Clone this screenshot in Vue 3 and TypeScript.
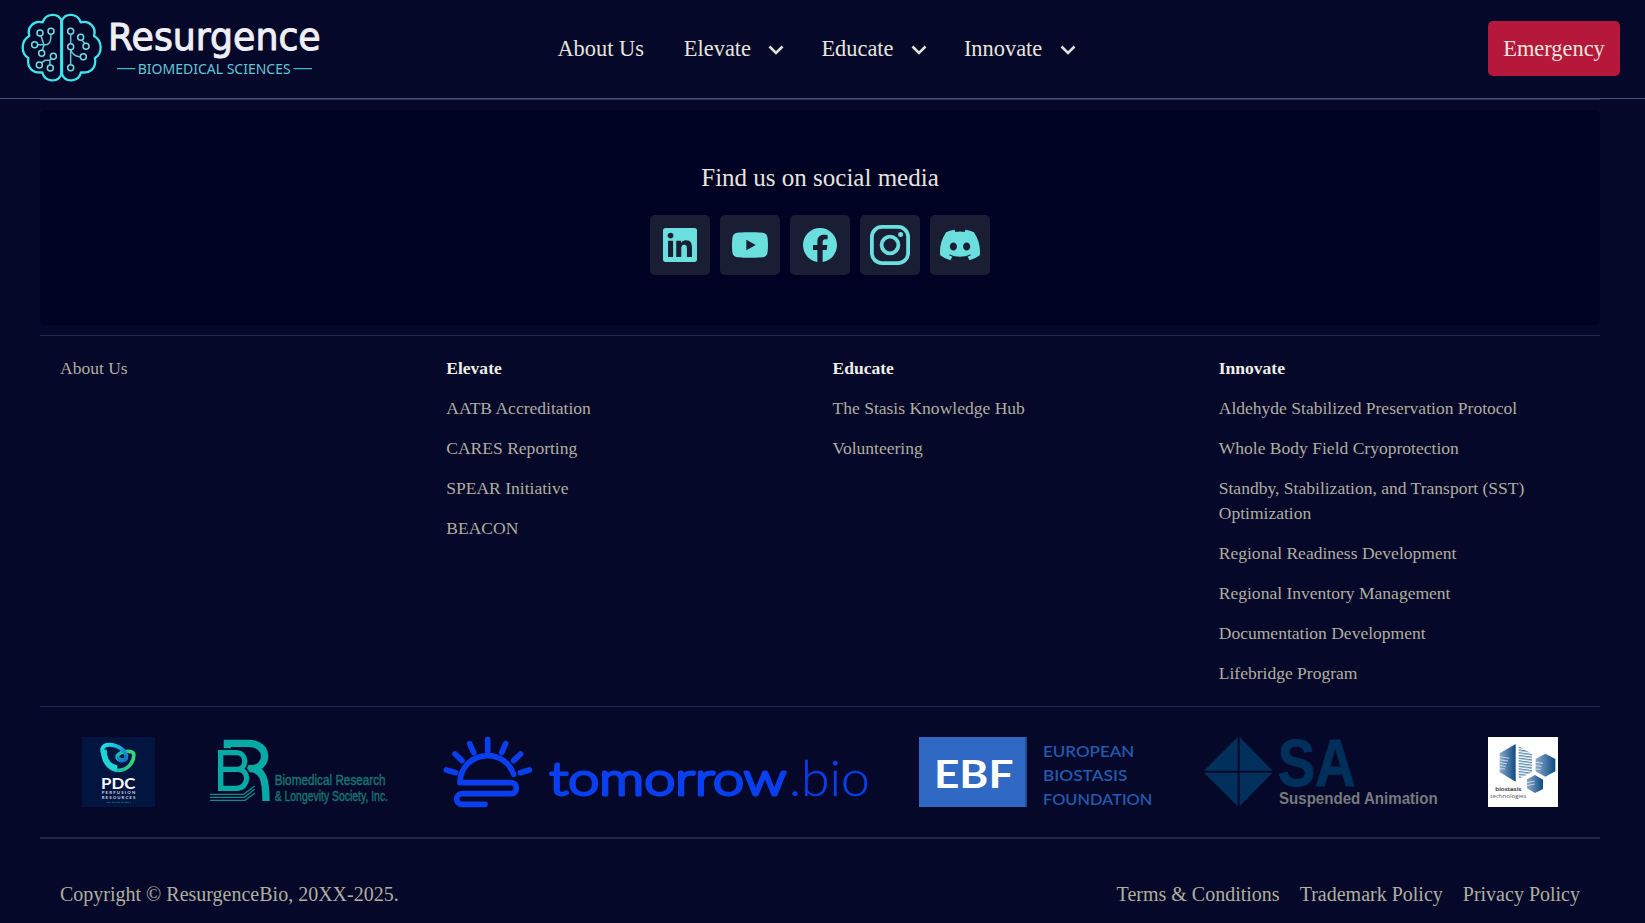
<script setup lang="ts">
interface NavItem { label: string; menu: boolean }
interface LinkGroup { title?: string; links: string[] }

const nav: NavItem[] = [
  { label: 'About Us', menu: false },
  { label: 'Elevate', menu: true },
  { label: 'Educate', menu: true },
  { label: 'Innovate', menu: true },
]

const groups: LinkGroup[] = [
  { links: ['About Us'] },
  { title: 'Elevate', links: ['AATB Accreditation', 'CARES Reporting', 'SPEAR Initiative', 'BEACON'] },
  { title: 'Educate', links: ['The Stasis Knowledge Hub', 'Volunteering'] },
  {
    title: 'Innovate',
    links: [
      'Aldehyde Stabilized Preservation Protocol',
      'Whole Body Field Cryoprotection',
      'Standby, Stabilization, and Transport (SST) Optimization',
      'Regional Readiness Development',
      'Regional Inventory Management',
      'Documentation Development',
      'Lifebridge Program',
    ],
  },
]

const legal: string[] = ['Terms & Conditions', 'Trademark Policy', 'Privacy Policy']

const nodes: number[][] = [
  [120, 99], [153, 94], [104, 134], [125, 160], [160, 169], [118, 195], [151, 204],
  [212, 94], [242, 112], [258, 139], [212, 140], [250, 170], [212, 203],
]
const rays: number[][] = [
  [10, 99, 38, 107], [36, 51, 57, 71], [80, 20, 92, 47], [134, 8, 134, 42],
  [188, 20, 176, 47], [233, 51, 212, 71], [259, 99, 232, 107],
]
</script>

<template>
  <div class="page">
    <header class="header">
      <svg class="brand" width="330" height="98" viewBox="0 0 990 294">
        <g fill="none" stroke="#3fe3ea" stroke-width="7" stroke-linejoin="round" stroke-linecap="round">
          <path d="M185 62C174 38 138 38 128 67C103 60 80 80 88 108C62 122 62 161 85 174C80 204 99 220 127 217C133 246 174 251 185 221Z" />
          <path d="M185 62C196 38 232 38 242 67C267 60 290 80 282 108C308 122 308 161 285 174C290 204 271 220 243 217C237 246 196 251 185 221Z" />
          <path d="M185 60V223" stroke-width="9" />
        </g>
        <g fill="none" stroke="#5cc8d8" stroke-width="4.5">
          <path d="M123 108L132 135M113 134H138Q153 133 153 104M132 135L127 151M126 188L135 181H149L156 177M149 181L150 195M212 104V131M212 150V193M212 147Q216 167 240 171M246 121L254 130" />
        </g>
        <circle v-for="(n, i) in nodes" :key="i" :cx="n[0]" :cy="n[1]" r="9" fill="#050828" stroke="#72dce4" stroke-width="4.5" />
        <text class="brand-name" x="324" y="149" textLength="638" lengthAdjust="spacingAndGlyphs">Resurgence</text>
        <path d="M351 206H406M880 206H936" stroke="#43b6c9" stroke-width="4" />
        <text class="brand-sub" x="413" y="221" textLength="459" lengthAdjust="spacingAndGlyphs">BIOMEDICAL SCIENCES</text>
      </svg>
      <nav class="nav">
        <a v-for="item in nav" :key="item.label" class="nav-item">
          {{ item.label }}
          <svg v-if="item.menu" width="16" height="10" viewBox="0 0 16 10">
            <path d="M1.5 1.5L8 8L14.5 1.5" fill="none" stroke="#e2e2db" stroke-width="2.5" />
          </svg>
        </a>
      </nav>
      <a class="emergency">Emergency</a>
    </header>

    <footer class="footer">
      <section class="social">
        <h2>Find us on social media</h2>
        <div class="tiles">
          <a class="tile">
            <svg width="34" height="34" viewBox="0 0 24 24"><path d="M20.447 20.452h-3.554v-5.569c0-1.328-.027-3.037-1.852-3.037-1.853 0-2.136 1.445-2.136 2.939v5.667H9.351V9h3.414v1.561h.046c.477-.9 1.637-1.85 3.37-1.85 3.601 0 4.267 2.37 4.267 5.455v6.286zM5.337 7.433c-1.144 0-2.063-.926-2.063-2.065 0-1.138.92-2.063 2.063-2.063 1.14 0 2.064.925 2.064 2.063 0 1.139-.925 2.065-2.064 2.065zm1.782 13.019H3.555V9h3.564v11.452zM22.225 0H1.771C.792 0 0 .774 0 1.729v20.542C0 23.227.792 24 1.771 24h20.451C23.2 24 24 23.227 24 22.271V1.729C24 .774 23.2 0 22.222 0h.003z" /></svg>
          </a>
          <a class="tile">
            <svg width="36" height="36" viewBox="0 0 24 24"><path d="M23.498 6.186a3.016 3.016 0 0 0-2.122-2.136C19.505 3.545 12 3.545 12 3.545s-7.505 0-9.377.505A3.017 3.017 0 0 0 .502 6.186C0 8.07 0 12 0 12s0 3.93.502 5.814a3.016 3.016 0 0 0 2.122 2.136c1.871.505 9.376.505 9.376.505s7.505 0 9.377-.505a3.015 3.015 0 0 0 2.122-2.136C24 15.93 24 12 24 12s0-3.93-.502-5.814zM9.545 15.568V8.432L15.818 12l-6.273 3.568z" /></svg>
          </a>
          <a class="tile">
            <svg width="34" height="34" viewBox="0 0 16 16"><path d="M16 8.049c0-4.446-3.582-8.05-8-8.05C3.58 0-.002 3.603-.002 8.05c0 4.017 2.926 7.347 6.75 7.951v-5.625h-2.03V8.05H6.75V6.275c0-2.017 1.195-3.131 3.022-3.131.876 0 1.791.157 1.791.157v1.98h-1.009c-.993 0-1.303.621-1.303 1.258v1.51h2.218l-.354 2.326H9.25V16c3.824-.604 6.75-3.934 6.75-7.951" /></svg>
          </a>
          <a class="tile">
            <svg width="40" height="40" viewBox="0 0 40 40">
              <g fill="none" stroke="#6bdfde" stroke-width="3.8">
                <rect x="1.9" y="1.9" width="36.2" height="36.2" rx="10" />
                <circle cx="20" cy="20" r="8.4" />
              </g>
              <circle cx="30.6" cy="9.5" r="2.5" />
            </svg>
          </a>
          <a class="tile">
            <svg width="40" height="40" viewBox="0 0 16 16"><path d="M13.545 2.907a13.2 13.2 0 0 0-3.257-1.011.05.05 0 0 0-.052.025c-.141.25-.297.577-.406.833a12.2 12.2 0 0 0-3.658 0 8 8 0 0 0-.412-.833.05.05 0 0 0-.052-.025c-1.125.194-2.22.534-3.257 1.011a.04.04 0 0 0-.021.018C.356 6.024-.213 9.047.066 12.032q.003.022.021.037a13.3 13.3 0 0 0 3.995 2.02.05.05 0 0 0 .056-.019q.463-.63.818-1.329a.05.05 0 0 0-.01-.059l-.018-.011a9 9 0 0 1-1.248-.595.05.05 0 0 1-.02-.066l.015-.019q.127-.095.248-.195a.05.05 0 0 1 .051-.007c2.619 1.196 5.454 1.196 8.041 0a.05.05 0 0 1 .053.007q.121.1.248.195a.05.05 0 0 1-.004.085 8 8 0 0 1-1.249.594.05.05 0 0 0-.03.03.05.05 0 0 0 .003.041c.24.465.515.909.817 1.329a.05.05 0 0 0 .056.019 13.2 13.2 0 0 0 4.001-2.02.05.05 0 0 0 .021-.037c.334-3.451-.559-6.449-2.366-9.106a.03.03 0 0 0-.02-.019m-8.198 7.307c-.789 0-1.438-.724-1.438-1.612s.637-1.613 1.438-1.613c.807 0 1.45.73 1.438 1.613 0 .888-.637 1.612-1.438 1.612m5.316 0c-.788 0-1.438-.724-1.438-1.612s.637-1.613 1.438-1.613c.807 0 1.451.73 1.438 1.613 0 .888-.631 1.612-1.438 1.612" /></svg>
          </a>
        </div>
      </section>

      <section class="columns">
        <div v-for="(group, i) in groups" :key="i" class="column">
          <strong v-if="group.title">{{ group.title }}</strong>
          <a v-for="link in group.links" :key="link">{{ link }}</a>
        </div>
      </section>

      <section class="partners">
        <svg width="73" height="70" viewBox="0 0 219 210">
          <defs>
            <linearGradient id="pdcA" x1="0" y1="0" x2="1" y2="0"><stop offset="0" stop-color="#1fd5d4" /><stop offset=".45" stop-color="#18b8b4" /><stop offset="1" stop-color="#35d873" /></linearGradient>
            <linearGradient id="pdcB" x1="0" y1="0" x2="1" y2="1"><stop offset="0" stop-color="#20e3ec" /><stop offset="1" stop-color="#146fc0" /></linearGradient>
          </defs>
          <rect width="219" height="210" fill="#021440" />
          <path d="M63 40C62 78 86 101 112 100C143 98 158 68 155 50C148 39 117 42 106 56C103 68 118 73 131 66" fill="none" stroke="url(#pdcA)" stroke-width="11" />
          <path d="M72 62C50 38 62 20 91 24C119 29 137 50 132 65C122 76 106 69 110 58" fill="none" stroke="url(#pdcB)" stroke-width="12" />
          <path d="M66 38C65 65 78 88 105 94" fill="none" stroke="#1fd5d4" stroke-width="17" />
          <text class="pdc" x="57" y="157" textLength="103" lengthAdjust="spacingAndGlyphs">PDC</text>
          <text class="pdc-small" x="59" y="172" textLength="101">PERFUSION</text>
          <text class="pdc-small" x="59" y="186" textLength="101">RESOURCES</text>
          <path d="M73 196H147" stroke="#2b7788" stroke-width="2" stroke-dasharray="14 3 8 2" />
        </svg>

        <svg width="186" height="70" viewBox="0 0 558 210">
          <g fill="none" stroke="#08aaa6">
            <path d="M64 40V19H128C190 19 190 91 138 95H120M138 95C168 99 180 122 180 192" stroke-width="22" />
            <path d="M44 47H90C124 47 124 93 96 97H44M96 97C132 97 130 154 92 154H44V39" stroke="#050828" stroke-width="26" />
            <path d="M44 47H90C124 47 124 93 96 97H44M96 97C132 97 130 154 92 154H44V39" stroke-width="16" />
            <path d="M12 172H113L146 147M12 181H115L146 157M12 190H117L147 168" stroke-width="4" stroke="#148b8b" />
          </g>
          <g class="brls">
            <text x="206" y="144" textLength="333" lengthAdjust="spacingAndGlyphs">Biomedical Research</text>
            <text x="206" y="192" textLength="340" lengthAdjust="spacingAndGlyphs">&amp; Longevity Society, Inc.</text>
          </g>
        </svg>

        <svg width="424" height="70" viewBox="0 0 1272 210">
          <g fill="none" stroke="#0a3ff0" stroke-width="17" stroke-linecap="round">
            <path v-for="(r, i) in rays" :key="i" :d="`M${r[0]} ${r[1]}L${r[2]} ${r[3]}`" />
            <path d="M212 112C201 78 170 56 134 56C87 57 51 91 51 137H205C225 137 225 170 205 170H57C37 170 34 202 58 202H126" stroke-linejoin="round" />
          </g>
          <text class="tomorrow" x="319" y="174" textLength="711" lengthAdjust="spacingAndGlyphs">tomorrow</text>
          <text class="dotbio" x="1038" y="177" textLength="242" lengthAdjust="spacingAndGlyphs">.bio</text>
        </svg>

        <svg width="235" height="70" viewBox="0 0 705 210">
          <rect x="3" width="323" height="210" fill="#2f69c3" />
          <path d="M324 0V210" stroke="#214b91" stroke-width="5" />
          <text class="ebf" x="48" y="154" textLength="238" lengthAdjust="spacingAndGlyphs">EBF</text>
          <g class="ebf-name">
            <text x="375" y="60" textLength="274" lengthAdjust="spacingAndGlyphs">EUROPEAN</text>
            <text x="375" y="132" textLength="253" lengthAdjust="spacingAndGlyphs">BIOSTASIS</text>
            <text x="375" y="204" textLength="328" lengthAdjust="spacingAndGlyphs">FOUNDATION</text>
          </g>
        </svg>

        <svg width="233" height="70" viewBox="0 0 699 210">
          <path d="M101 0V101H0ZM107 0V101H206ZM101 107V208L0 107ZM107 107V208L206 107Z" fill="#02305c" />
          <text class="sa" x="221" y="148" textLength="234" lengthAdjust="spacingAndGlyphs">SA</text>
          <text class="sa-name" x="225" y="200" textLength="476" lengthAdjust="spacingAndGlyphs">Suspended Animation</text>
        </svg>

        <svg width="70" height="70" viewBox="0 0 210 210">
          <defs>
            <linearGradient id="btA"><stop offset="0" stop-color="#8aa9c8" /><stop offset="1" stop-color="#0c4a84" /></linearGradient>
            <pattern id="btS" width="210" height="8" patternUnits="userSpaceOnUse" patternTransform="rotate(8)"><rect width="210" height="4" fill="#5c88b0" /></pattern>
          </defs>
          <rect width="210" height="210" fill="#fff" />
          <path d="M83 21V134L35 106V49Z" fill="url(#btA)" />
          <path d="M92 28L132 50V105L92 126Z" fill="url(#btS)" />
          <path d="M172 50L202 66V103L172 119L143 103V66Z" fill="url(#btA)" />
          <path d="M141 114L165 128V156L141 168L117 154V127Z" fill="url(#btA)" />
          <path d="M34 59L64 64M34 68L60 72M34 77L56 80M34 86L53 88M34 95L51 96M143 76L165 79M143 86L161 88M143 96L158 97M117 137L139 132M117 146L140 141" stroke="#fff" stroke-width="2" />
          <text class="bt" x="22" y="163" textLength="78" lengthAdjust="spacingAndGlyphs">biostasis</text>
          <text class="bt light" x="7" y="184" textLength="108" lengthAdjust="spacingAndGlyphs">technologies</text>
        </svg>
      </section>

      <section class="bottom">
        <span>Copyright © ResurgenceBio, 20XX-2025.</span>
        <div class="legal"><a v-for="l in legal" :key="l">{{ l }}</a></div>
      </section>
    </footer>
  </div>
</template>

<style>
body { background: #050828; }
</style>

<style scoped>
.page {
  height: 923px;
  overflow: hidden;
  background: #050828;
  color: #e5e5de;
  font-family: "Liberation Serif", "Times New Roman", serif;
}
svg { display: block; flex: none; overflow: visible; }
.header {
  display: flex;
  align-items: center;
  height: 98px;
  border-bottom: 1px solid #43528b;
  padding-right: 25px;
}
.nav {
  display: flex;
  gap: 37px;
  margin-left: 227.4px;
  font-size: 22.4px;
  line-height: 28px;
}
.nav-item { display: flex; align-items: center; gap: 17.4px; }
.nav-item:first-child { margin-right: 3px; }
.nav-item svg { margin-top: 2px; }
.emergency {
  box-sizing: border-box;
  width: 132px;
  height: 55px;
  margin: 0 0 1px auto;
  border-radius: 5px;
  background: #b5183a;
  font-size: 22.4px;
  line-height: 55px;
  text-align: center;
}
.footer { margin: 0 45px 0 40px; border-top: 1px solid #2b3048; }
.social {
  display: flex;
  flex-direction: column;
  align-items: center;
  box-sizing: border-box;
  height: 215px;
  margin: 10px 0;
  padding-top: 53px;
  border-radius: 5px;
  background: #000224;
}
h2 { margin: 0 0 23px; font-size: 25px; font-weight: 400; line-height: 29px; }
.tiles { display: flex; gap: 10px; }
.tile {
  display: grid;
  place-items: center;
  width: 60px;
  height: 60px;
  border-radius: 5px;
  background: #1a1e34;
  fill: #6bdfde;
}
.columns {
  display: grid;
  grid-template-columns: repeat(4, 1fr);
  column-gap: 25px;
  box-sizing: border-box;
  height: 371px;
  padding: 20px;
  border-top: 1px solid #24284a;
  font-size: 17.54px;
  line-height: 25px;
}
.column { display: flex; flex-direction: column; gap: 15px; color: #b0aea1; }
.column strong { color: #eeeee7; }
.partners {
  display: flex;
  justify-content: space-between;
  padding: 30px 42px;
  border-top: 1px solid #24284a;
}
.bottom {
  display: flex;
  justify-content: space-between;
  padding: 43px 20px 0;
  border-top: 2px solid #23273f;
  color: #b0aea1;
  font-size: 20px;
  line-height: 24px;
}
.legal { display: flex; gap: 20px; }
.brand-name { fill: #eeeef5; stroke: #eeeef5; stroke-width: 3; stroke-linejoin: round; font: 114px "DejaVu Sans", sans-serif; }
.brand-sub { fill: #62c6d8; font: 45px "Noto Sans", sans-serif; }
.pdc { fill: #fff; font: 700 45px Lato, sans-serif; }
.pdc-small { fill: #c9d1df; font: 700 13px Lato, sans-serif; }
.brls { fill: #16716f; stroke: #16716f; stroke-width: 1.5; font: 46px "Liberation Sans", sans-serif; }
.tomorrow { fill: #0a3ff0; stroke: #0a3ff0; stroke-width: 9; stroke-linejoin: round; font: 300 138px Lato, sans-serif; }
.dotbio { fill: #0a3ff0; stroke: #0a3ff0; stroke-width: 1; font: 300 147px Lato, sans-serif; }
.ebf { fill: #fff; font: 700 116px Lato, sans-serif; }
.ebf-name { fill: #2458ad; font: 600 47px Lato, sans-serif; }
.sa { fill: #02305c; stroke: #02305c; stroke-width: 3; font: 700 199px "Liberation Sans", sans-serif; }
.sa-name { fill: #77797d; font: 700 47px "Liberation Sans", sans-serif; }
.bt { fill: #333; stroke: #333; stroke-width: .5; font: 18px "Open Sans", sans-serif; }
.bt.light { fill: #555; stroke: none; }
</style>
